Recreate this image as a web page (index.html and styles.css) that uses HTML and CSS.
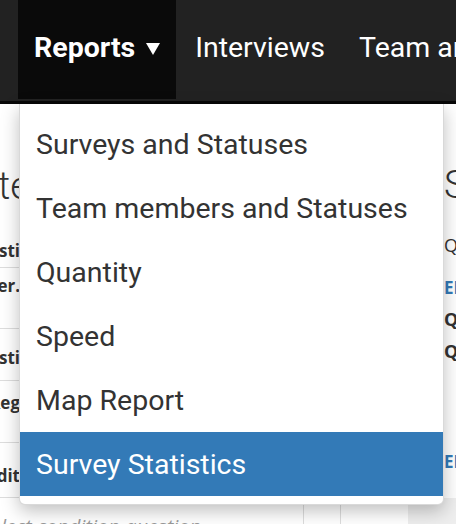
FILE: index.html
```html
<!DOCTYPE html>
<html>
<head>
<meta charset="utf-8">
<link rel="stylesheet" href="styles.css">
</head>
<body>
<nav class="navbar">
  <ul class="nav">
    <li class="nav-item active">Reports <span class="caret"></span></li>
    <li class="nav-item">Interviews</li>
    <li class="nav-item">Team and Roles</li>
  </ul>
  <ul class="dropdown">
    <li class="dd-item">Surveys and Statuses</li>
    <li class="dd-item">Team members and Statuses</li>
    <li class="dd-item">Quantity</li>
    <li class="dd-item">Speed</li>
    <li class="dd-item">Map Report</li>
    <li class="dd-item selected">Survey Statistics</li>
  </ul>
</nav>
<main class="content">
  <section class="left">
    <h2 class="heading"><span>Survey Template</span></h2>
    <table class="tbl">
      <tr class="r1"><td><span class="cell">Questi</span></td></tr>
      <tr class="r2"><td><span class="cell">Number.</span></td></tr>
      <tr class="r3"><td><span class="cell">Questi</span></td></tr>
      <tr class="r4"><td><span class="cell">Reg</span></td></tr>
      <tr class="r5"><td><span class="cell">Condit</span></td></tr>
    </table>
    <div class="foot">
      <div class="foot-text">Select condition question</div>
      <div class="foot-cell c1"></div>
      <div class="foot-cell c2"></div>
      <div class="foot-cell c3"></div>
    </div>
  </section>
  <section class="right">
    <h2 class="heading-r">Statistics</h2>
    <p class="q">Question</p>
    <p class="link l1">EDIT</p>
    <p class="qb">Question one</p>
    <p class="qb">Question two</p>
    <p class="link l2">EDIT</p>
  </section>
</main>
</body>
</html>
```
FILE: styles.css
```css
* { box-sizing: border-box; }
html, body { margin: 0; padding: 0; }
body {
  width: 456px;
  height: 524px;
  overflow: hidden;
  background: #fff;
  font-family: Roboto, "Liberation Sans", sans-serif;
  position: relative;
}
.navbar {
  height: 104px;
  background: #222;
  border-bottom: 3px solid #080808;
  padding-left: 18px;
  position: relative;
  z-index: 5;
}
.nav {
  list-style: none;
  margin: 0;
  padding: 0;
  display: flex;
  height: 99px;
  white-space: nowrap;
}
.nav-item {
  display: flex;
  align-items: center;
  padding: 0 15px 4px 19px;
  color: #fff;
  font-size: 28.5px;
  height: 99px;
}
.nav-item.active {
  background: #0a0a0a;
  font-weight: 700;
  padding: 0 16px 4px 16px;
}
.caret {
  display: inline-block;
  width: 0;
  height: 0;
  margin-left: 11px;
  margin-top: 2px;
  border-left: 7px solid transparent;
  border-right: 7px solid transparent;
  border-top: 12px solid #fff;
}
.dropdown {
  position: absolute;
  top: 104px;
  left: 19px;
  width: 425px;
  margin: 0;
  padding: 8px 0;
  list-style: none;
  background: #fff;
  border: 1px solid rgba(0,0,0,.15);
  border-top: none;
  border-radius: 0 0 6px 6px;
  box-shadow: 0 6px 18px rgba(0,0,0,.25);
}
.dd-item {
  height: 64px;
  display: flex;
  align-items: center;
  padding-left: 16px;
  color: #333;
  font-size: 28.5px;
  white-space: nowrap;
}
.dd-item.selected {
  background: #337ab7;
  color: #fff;
}
.content {
  display: flex;
  color: #333;
}
.left {
  margin-left: -52px;
  width: 482px;
  flex: none;
}
.heading {
  display: flex;
  justify-content: flex-end;
  font-weight: 300;
  font-size: 38px;
  line-height: 44px;
  margin: 60px 0 20px 0;
  white-space: nowrap;
  width: 82px;
}
.tbl {
  border-collapse: collapse;
  width: 100%;
}
.tbl td {
  vertical-align: top;
  border-bottom: 1px solid #ddd;
  padding: 0;
  white-space: nowrap;
}
.cell {
  display: flex;
  justify-content: flex-end;
  width: 72px;
  font-weight: 700;
  font-size: 17px;
  line-height: 23px;
  font-family: "Open Sans", sans-serif;
}
.r1 td { height: 39px; padding-top: 11px; }
.r2 td { height: 61px; padding-top: 6px; }
.r3 td { height: 52px; padding-top: 17px; }
.r4 td { height: 62px; padding-top: 10px; }
.r5 td { height: 55px; padding-top: 21px; }
.foot {
  display: flex;
  height: 40px;
}
.foot-text {
  font-style: italic;
  color: #999;
  font-size: 20px;
  line-height: 23px;
  padding: 17px 0 0 33px;
  width: 355px;
  flex: none;
  white-space: nowrap;
  font-family: "Open Sans", sans-serif;
}
.foot-cell { border-left: 1px solid #ddd; flex: none; }
.c1 { width: 37px; }
.c2 { width: 68px; }
.c3 { background: #eee; width: 60px; border-left: none; }
.right {
  flex: none;
  width: 200px;
  padding-left: 14px;
}
.heading-r {
  font-weight: 300;
  font-size: 38px;
  line-height: 44px;
  margin: 59px 0 0 0;
  white-space: nowrap;
}
.right p { margin: 0; white-space: nowrap; font-family: "Open Sans", sans-serif; }
.q { font-size: 18px; line-height: 24px; margin-top: 26px !important; }
.link { color: #337ab7; font-weight: 700; font-size: 17px; line-height: 22px; }
.l1 { margin-top: 20px !important; }
.qb { font-weight: 700; font-size: 18px; line-height: 24px; margin-top: 8px !important; }
.l2 { margin-top: 88px !important; }
```
